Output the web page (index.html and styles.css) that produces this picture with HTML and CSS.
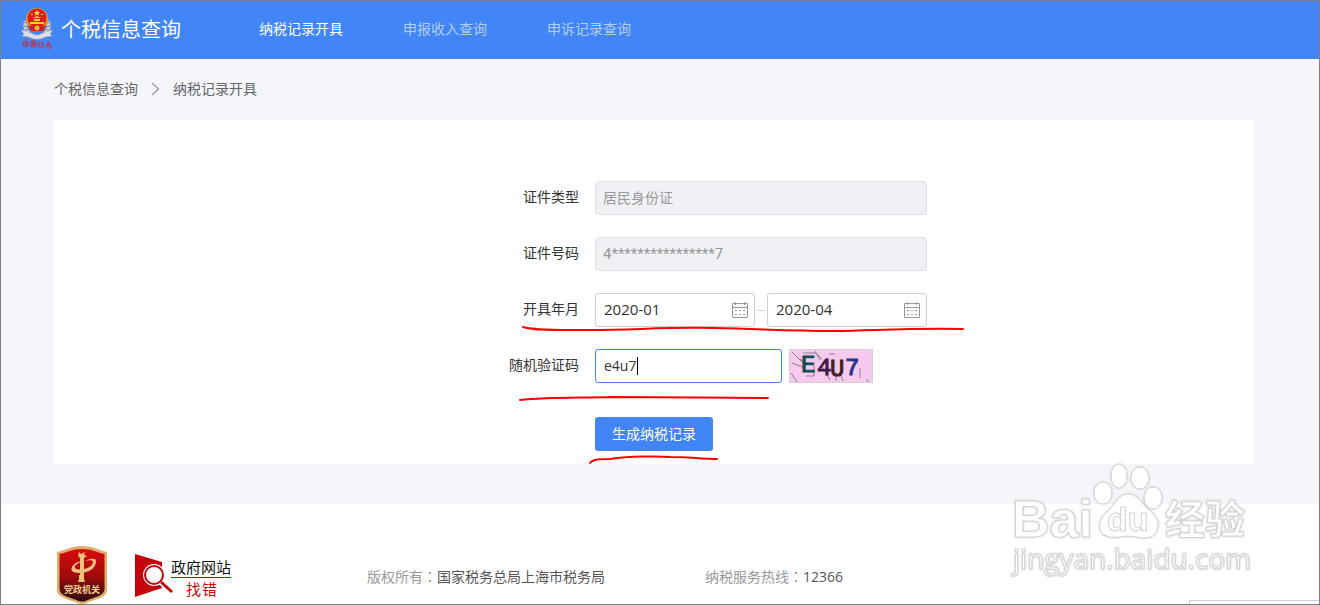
FILE: index.html
```html
<!DOCTYPE html>
<html lang="zh-CN">
<head>
    <meta charset="UTF-8">
    <meta name="viewport" content="width=device-width, initial-scale=1.0">
    <title>个税信息查询</title>
    <link rel="stylesheet" href="styles.css">
</head>
<body>
    <header class="header">
        <a href="#" class="brand">
            <svg class="brand-logo" width="32" height="44" viewBox="0 0 32 44">
                <path d="M5 13C3 20 6 26 12 28M27 13c2 7-1 13-7 15" fill="none" stroke="#c9cbd0" stroke-width="4"/>
                <path d="M3 14l5 2M3 18l5 1M4 22l5-1M7 26l4-3M29 14l-5 2M29 18l-5 1M28 22l-5-1M25 26l-4-3" stroke="#7f8791" stroke-width="1"/>
                <path d="M0 22l8 2c5 4 11 4 16 0l8-2-3 4 2 2-7 1c-5 3-11 3-16 0l-7-1 2-2z" fill="#dfe1e5" stroke="#a2a7af" stroke-width="0.5"/>
                <ellipse cx="16" cy="11" rx="11" ry="11" fill="#e9941e"/>
                <ellipse cx="16" cy="10" rx="9.500" ry="9.500" fill="#dc1f16"/>
                <path d="M16 2l1 2 2 .2-1.500 1.500.5 2-2-1.200-2 1.200.5-2L13 4.200l2-.2z" fill="#ffd83b"/>
                <path d="M10 6h2v1h-2zM20 6h2v1h-2zM12 10l4-2 4 2zM13 11h6v2h-6zM9 14h14v2H9z" fill="#ffd03a"/>
                <path d="M7 17c5 2 13 2 18 0l-3 6H10z" fill="#c8231a"/>
                <circle cx="16" cy="20" r="2.500" fill="#f1b52b"/>
                <g fill="none" stroke="#c33044" stroke-width="1">
                    <path d="M2 34h5v3H2zM5 31v10"/>
                    <path d="M10 33h5v6h-5zM11 35h3M11 37h3M12.500 34v4"/>
                    <path d="M17 34l2 1-2 2M18 35v5M20 34l3 2h-3M21 37l-1 3M22 37l2 3"/>
                    <path d="M26 33l3 2-4 2M29 34l-3 3M26 37h4v3h-4z"/>
                </g>
            </svg>
            <span class="brand-name">个税信息查询</span>
        </a>
        <nav class="nav">
            <a href="#" class="nav-link active">纳税记录开具</a>
            <a href="#" class="nav-link">申报收入查询</a>
            <a href="#" class="nav-link">申诉记录查询</a>
        </nav>
    </header>

    <main class="main">
        <div class="breadcrumb">
            <a href="#">个税信息查询</a>
            <svg width="9" height="14" viewBox="0 0 9 14"><path d="M1 1l6.500 6L1 13" fill="none" stroke="#999" stroke-width="1.300"/></svg>
            <span>纳税记录开具</span>
        </div>

        <form class="card">
            <div class="row">
                <label for="idType">证件类型</label>
                <input class="input" id="idType" type="text" value="居民身份证" disabled>
            </div>
            <div class="row">
                <label for="idNumber">证件号码</label>
                <input class="input input-masked" id="idNumber" type="text" value="4****************7" disabled>
            </div>
            <div class="row">
                <label for="monthStart">开具年月</label>
                <div class="range">
                    <div class="date">
                        <input class="input" id="monthStart" type="text" value="2020-01">
                        <svg class="date-icon" width="18" height="18" viewBox="0 0 18 18">
                            <path d="M1.500 2.500h15v14h-15zM1.500 6.500h15M4.500 1v3M13.500 1v3" fill="none" stroke="#999" stroke-width="1"/>
                            <path d="M8 9h2v1H8zM12 9h2v1h-2zM4 9h2v1H4zM4 13h2v1H4zM8 13h2v1H8zM12 13h2v1h-2z" fill="#999"/>
                        </svg>
                    </div>
                    <span class="range-dash"></span>
                    <div class="date">
                        <input class="input" id="monthEnd" type="text" value="2020-04" aria-label="截止年月">
                        <svg class="date-icon" width="18" height="18" viewBox="0 0 18 18">
                            <path d="M1.500 2.500h15v14h-15zM1.500 6.500h15M4.500 1v3M13.500 1v3" fill="none" stroke="#999" stroke-width="1"/>
                            <path d="M8 9h2v1H8zM12 9h2v1h-2zM4 9h2v1H4zM4 13h2v1H4zM8 13h2v1H8zM12 13h2v1h-2z" fill="#999"/>
                        </svg>
                    </div>
                </div>
            </div>
            <div class="row">
                <label for="captcha">随机验证码</label>
                <div class="captcha">
                    <div class="captcha-field">
                        <input class="input input-focus" id="captcha" type="text" value="e4u7">
                        <span class="caret"></span>
                    </div>
                    <button type="button" class="captcha-image" aria-label="刷新验证码">
                        <svg width="82" height="32" viewBox="0 0 82 32">
                            <path d="M2 2l12 12M2 13l13 5M8 8l8 5M13 3h13l6 6M25 1l5 9M24 12v14h-8M32 16l8 14M1 23l6 9M39 4h6M46 22v9M50 22l3 9M70 18v10M76 29l3 3M56 9l12 4" fill="none" stroke="#8d7f8d"/>
                            <g class="captcha-text">
                                <text x="11" y="22" fill="#0d4e50" stroke="#0d4e50">E</text>
                                <text x="27" y="25" fill="#3d1b4f" stroke="#3d1b4f">4</text>
                                <text x="40" y="26" fill="#46201c" stroke="#46201c">U</text>
                                <text x="55" y="25" fill="#26378a" stroke="#26378a">7</text>
                            </g>
                        </svg>
                    </button>
                </div>
            </div>
            <div class="row row-submit">
                <button type="button" class="submit">生成纳税记录</button>
            </div>
        </form>
    </main>

    <footer class="footer">
        <svg class="badge" width="50" height="58" viewBox="0 0 50 58">
            <defs>
                <linearGradient id="shield" x1="0" y1="0" x2="0" y2="1">
                    <stop offset="0" stop-color="#d90b0b"/>
                    <stop offset="0.500" stop-color="#a30a0c"/>
                    <stop offset="1" stop-color="#2c0c0e"/>
                </linearGradient>
            </defs>
            <path d="M0 6C9 4 14 0 25 0s16 4 25 6v38c0 8-12 9-20 13q-5 2-10 0C12 53 0 52 0 44z" fill="#dfae6b"/>
            <path d="M2.500 8C11 6 16 3 25 3s14 3 22.500 5v35c0 7-10 8-19 12q-3.500 1-7 0C12.500 51 2.500 50 2.500 43z" fill="url(#shield)"/>
            <g fill="#efc07e">
                <path d="M22 6l2 2 4-2-1 3 3 1-3 2v17h-4V12l-2-2z"/>
                <path d="M22 29h5v4l1 3h-7l1-3z"/>
                <path d="M39 15c0 8-8 12-17 12-6 0-9-3-7-6 2-4 7-6 12-6-6 2-10 4-9 7 4 4 18 0 18-6 0-2-4-2-8-1 6-3 11-3 11 0z"/>
            </g>
            <text class="badge-text" x="25" y="47" text-anchor="middle">党政机关</text>
        </svg>
        <svg class="finder" width="98" height="46" viewBox="0 -1 98 46">
            <path d="M0 1l27 8v26L0 44z" fill="#c4060c"/>
            <circle cx="19" cy="22" r="11" fill="#fff"/>
            <circle cx="19" cy="22" r="9" fill="#fff" stroke="#c4060c" stroke-width="2"/>
            <path d="M26 29l11 10" stroke="#fff" stroke-width="6"/>
            <path d="M26 29l11 10" stroke="#c4060c" stroke-width="3"/>
            <text class="finder-text" x="36" y="20">政府网站</text>
            <path d="M36 24.500h60" stroke="#c4060c" stroke-width="1"/>
            <text class="finder-text finder-red" x="51" y="42">找</text>
            <text class="finder-text finder-red" x="67" y="42">错</text>
        </svg>
        <p class="footer-item">版权所有<span class="colon" lang="zh-TW">：</span><span class="value">国家税务总局上海市税务局</span></p>
        <p class="footer-item">纳税服务热线<span class="colon" lang="zh-TW">：</span><span class="value">12366</span></p>
    </footer>

    <div class="corner-panel"></div>

    <svg class="watermark" width="250" height="120" viewBox="0 0 250 120">
        <g class="wm-shape">
            <ellipse cx="98" cy="34" rx="9" ry="11"/>
            <ellipse cx="114" cy="17" rx="8" ry="12"/>
            <ellipse cx="135" cy="19" rx="9" ry="11"/>
            <ellipse cx="148" cy="39" rx="9" ry="11"/>
            <path d="M123 35c9 0 13 8 19 14 10 8 13 14 10 22-3 9-13 9-20 7-6-1-12-1-18 0-8 1-17 0-19-8-2-7 2-13 9-19 7-7 10-16 19-16z"/>
        </g>
        <text class="wm-bai" x="7" y="78">Bai</text>
        <text class="wm-du" x="102" y="72">du</text>
        <text class="wm-cn" x="160" y="75">经验</text>
        <text class="wm-url" x="8" y="110">jingyan.baidu.com</text>
    </svg>

    <!-- hand drawn marks -->
    <svg class="marks" width="460" height="150" viewBox="0 0 460 150">
        <path d="M13 7c12 4 40 3 68 3 45 0 70-3 123-2 50 1 70 3 120 3 50-1 80-3 129-2"/>
        <path d="M10 80c30-3 60-2 91-3 60 0 100 1 157 1"/>
        <path d="M80 143c3-4 10-4 20-4 20-3 50-3 60-2 20 0 30 2 47 2"/>
    </svg>
</body>
</html>
```
FILE: styles.css
```css
* {
    margin: 0;
    padding: 0;
    box-sizing: border-box;
}
body {
    position: relative;
    display: flex;
    flex-direction: column;
    min-height: 100vh;
    border: 1px solid #7f7f7f;
    background-color: #fff;
    color: #333;
    font-family: "Open Sans", "Noto Sans CJK SC", sans-serif;
    font-size: 14px;
    line-height: 20px;
    overflow-x: hidden;
}
a {
    color: inherit;
    text-decoration: none;
}

/* header */
.header {
    display: flex;
    align-items: center;
    height: 58px;
    padding-left: 20px;
    background: #4285f6;
    color: #fff;
}
.brand {
    display: flex;
    align-items: center;
    gap: 8px;
}
.brand-name {
    font-size: 20px;
    line-height: 28px;
}
.nav {
    display: flex;
    gap: 60px;
    margin-left: 78px;
    padding-bottom: 2px;
}
.nav-link {
    color: #b3cefb;
}
.nav-link.active {
    color: #fff;
}

/* content */
.main {
    padding: 20px 65px 40px 53px;
    background: #f4f6fa;
}
.breadcrumb {
    display: flex;
    align-items: center;
    gap: 13px;
    margin-bottom: 21px;
    color: #666;
}
.card {
    display: flex;
    flex-direction: column;
    gap: 22px;
    padding: 61px 0 13px;
    background: #fff;
    border-radius: 2px;
}
.row {
    display: grid;
    grid-template-columns: 43.75% 332px;
    column-gap: 16px;
    align-items: center;
}
.row label {
    padding-bottom: 2px;
    text-align: right;
}
.row-submit {
    margin-top: 12px;
}
.input {
    width: 100%;
    height: 34px;
    padding: 0 8px 2px;
    border: 1px solid #cfd1d8;
    border-radius: 3px;
    background: #fff;
    color: #333;
    font-family: inherit;
    font-size: 14px;
    outline: none;
}
.input:disabled {
    padding-left: 7px;
    border-color: #e0e2e8;
    background: #eff1f5;
    color: #999;
}
.input-masked {
    padding-bottom: 0;
    font-family: Roboto, sans-serif;
    font-size: 15px;
}
.input-focus {
    border-color: #4285f6;
}
.range {
    display: flex;
    align-items: center;
    justify-content: space-between;
}
.range-dash {
    width: 8px;
    height: 1px;
    background: #cfd1d8;
}
.date {
    position: relative;
    width: 160px;
}
.date .input {
    font-size: 15px;
}
.date-icon {
    position: absolute;
    top: 8px;
    right: 6px;
}
.captcha {
    display: flex;
    gap: 7px;
}
.captcha-field {
    position: relative;
    width: 187px;
}
.caret {
    position: absolute;
    top: 8px;
    left: 42px;
    width: 1px;
    height: 18px;
    background: #000;
}
.captcha-image {
    width: 84px;
    height: 34px;
    border: 1px solid #cfd1d8;
    background: #f7caed;
    cursor: pointer;
}
.captcha-image svg {
    display: block;
}
.captcha-text {
    font-family: "Liberation Mono", monospace;
    font-size: 24px;
    stroke-width: 1px;
}
.submit {
    grid-column: 2;
    justify-self: start;
    height: 34px;
    padding: 0 17px 2px;
    border: none;
    border-radius: 3px;
    background: #4285f6;
    color: #fff;
    font-family: inherit;
    font-size: 14px;
    cursor: pointer;
}

/* footer */
.footer {
    display: flex;
    align-items: center;
    padding: 42px 0 0 56px;
    overflow: hidden;
}
.badge {
    margin-right: 28px;
}
.finder {
    margin-right: 134px;
}
.badge-text {
    fill: #f3cd93;
    font-size: 9px;
    font-weight: bold;
}
.finder-text {
    fill: #111;
    font-size: 15px;
}
.finder-red {
    fill: #c4060c;
}
.footer-item {
    margin-right: 100px;
    padding-top: 2px;
    color: #999;
    white-space: nowrap;
}
.footer-item .colon {
    font-family: "Noto Sans CJK TC", sans-serif;
}
.footer-item .value {
    color: #555;
}
.corner-panel {
    position: absolute;
    right: 0;
    bottom: 0;
    width: 130px;
    height: 4px;
    border: 1px solid #c9cde0;
    border-width: 1px 0 0 1px;
    background: #fff;
}

/* overlays */
.watermark {
    position: absolute;
    top: 458px;
    right: 64px;
    overflow: visible;
    pointer-events: none;
    filter: drop-shadow(0 0 1px #ccc);
}
.wm-shape,
.watermark text {
    fill: #fff;
    stroke: #d2d2d2;
    stroke-width: 1px;
}
.wm-bai {
    font-family: "Liberation Sans", Arial, sans-serif;
    font-size: 52px;
    font-weight: bold;
}
.wm-du {
    font-family: "Liberation Sans", Arial, sans-serif;
    font-size: 34px;
    font-weight: bold;
}
.wm-cn {
    font-size: 40px;
    font-weight: bold;
}
.wm-url {
    font-size: 28px;
}
.marks {
    position: absolute;
    top: 319px;
    left: 509px;
    fill: none;
    stroke: #f00;
    stroke-width: 2;
    stroke-linecap: round;
    pointer-events: none;
}
```
